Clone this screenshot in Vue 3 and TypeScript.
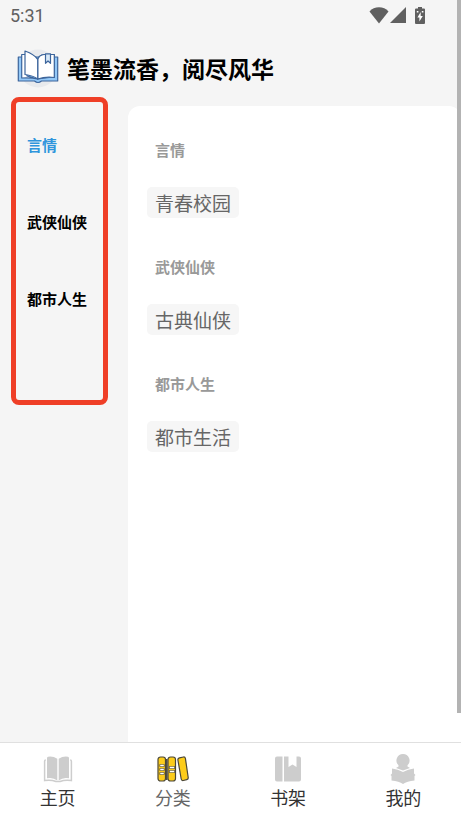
<script setup lang="ts">
import { ref } from 'vue'

interface Category {
  name: string
  tags: string[]
}

interface Tab {
  id: string
  label: string
}

const categories: Category[] = [
  { name: '言情', tags: ['青春校园'] },
  { name: '武侠仙侠', tags: ['古典仙侠'] },
  { name: '都市人生', tags: ['都市生活'] },
]

const tabs: Tab[] = [
  { id: 'home', label: '主页' },
  { id: 'category', label: '分类' },
  { id: 'shelf', label: '书架' },
  { id: 'mine', label: '我的' },
]

const activeCategory = ref('言情')
const activeTab = ref('category')
</script>

<template>
  <div class="screen">
    <div class="status">
      <span class="clock">5:31</span>
      <div class="status-icons">
        <svg class="wifi" viewBox="0 0 20 17" aria-hidden="true">
          <path d="M10 16.500 0.500 4.500C3 1.600 6.200 .3 10 .3s7 1.300 9.500 4.200Z" />
        </svg>
        <svg class="signal" viewBox="0 0 16 16" aria-hidden="true">
          <path d="M16 0v16H0Z" />
        </svg>
        <svg class="battery" viewBox="0 0 10 17" aria-hidden="true">
          <path d="M3 0h4v1.500h2q1 0 1 1V16q0 1-1 1H1q-1 0-1-1V2.500q0-1 1-1h2Z" />
          <path class="bolt" d="M5.700 5 2.400 10.500h2V14.500L7.800 9H5.700ZM1.800 4h1.600v1.400H1.800ZM6.800 4h1.600v1.400H6.800Z" />
        </svg>
      </div>
    </div>

    <header class="header">
      <svg class="logo" viewBox="0 0 42 40" aria-hidden="true">
        <circle cx="21" cy="20.500" r="19" fill="#e8eaed" />
        <g stroke="#3c659c" stroke-width="1.200" stroke-linejoin="round">
          <path d="M1.300 9H40.700V33H24.500Q21 36 17.500 33H1.300Z" fill="#93c8f7" />
          <path d="M4.700 6.500H10V28L20.700 31 32 29.500H37.300V6.500H27Q22.500 7 20.700 11.300V31Q14 29.500 4.700 30Z" fill="#fff" />
          <path d="M20.700 31Q28 28.500 37.300 29.500V6.500H27Q22.500 7 20.700 11.300Z" fill="#fff" />
          <path d="M20.700 31V11.300Q17.500 6.500 8 3V26.500Q16 27.500 20.700 31Z" fill="#fff" />
          <path d="M28.500 5.800V15.300L31 13 33.500 15.300V5.800Z" fill="#d8e9f8" />
        </g>
      </svg>
      <h1 class="title">笔墨流香，阅尽风华</h1>
    </header>

    <div class="content">
      <nav class="sidebar" aria-label="分类">
        <button
          v-for="category in categories"
          :key="category.name"
          type="button"
          class="side-item"
          :class="{ active: category.name === activeCategory }"
          @click="activeCategory = category.name"
        >
          {{ category.name }}
        </button>
      </nav>

      <main class="panel">
        <section v-for="category in categories" :key="category.name" class="group">
          <h2 class="group-title">{{ category.name }}</h2>
          <div class="tags">
            <button v-for="tag in category.tags" :key="tag" type="button" class="tag">{{ tag }}</button>
          </div>
        </section>
      </main>
    </div>

    <nav class="tabbar" aria-label="导航">
      <button
        v-for="tab in tabs"
        :key="tab.id"
        type="button"
        class="tab"
        :class="{ active: tab.id === activeTab }"
        @click="activeTab = tab.id"
      >
        <svg v-if="tab.id === 'home'" class="tab-icon" viewBox="0 0 32 28" aria-hidden="true">
          <path d="M6 1.800Q11 1 15.300 3.800V25.500Q11 22 5 23.300V3Q5 2 6 1.800ZM26 1.800Q21 1 16.700 3.800V25.500Q21 22 27 23.300V3Q27 2 26 1.800Z" />
          <path d="M3.800 5Q2.600 5 2.600 6.200V25.500Q9 24.500 14 26.500H18Q23 24.500 29.400 25.500V6.200Q29.400 5 28.200 5" class="outline" />
        </svg>
        <svg v-else-if="tab.id === 'category'" class="tab-icon" viewBox="0 0 32 28" aria-hidden="true">
          <g fill="#fccc1b" stroke="#4b4738" stroke-width="1.200">
            <rect x="1" y="2" width="7.500" height="24" rx="2.500" />
            <rect x="11" y="2" width="7.500" height="24" rx="2.500" />
            <path d="m22.500 2.800 4-.8q1.500-.2 1.900 1.300L31.200 22.500q.2 1.700-1.400 2.100l-3.500.9q-1.800.3-2.100-1.500L20.900 5q-.2-1.800 1.600-2.200Z" />
          </g>
          <path d="M9.800 4v21" stroke="#4b4738" stroke-width="1.500" />
          <path d="M2.500 10.500h5M2.500 14.500h5M2.500 18.500h5M12 12.500h6M12 16.500h6" stroke="#4b4738" stroke-width="2.600" />
          <path d="M3.200 10.500h3.600M3.200 14.500h3.600M3.200 18.500h3.600M12.700 12.500h4.600M12.700 16.500h4.600" stroke="#fff" stroke-width="1.400" />
        </svg>
        <svg v-else-if="tab.id === 'shelf'" class="tab-icon" viewBox="0 0 32 28" aria-hidden="true">
          <path d="M5 1.500h5.500v25H5q-2 0-2-2v-21q0-2 2-2ZM12 1.500h4.500V12l4-2.500 4 2.500V1.500H27q2 0 2 2v21q0 2-2 2H12Z" />
        </svg>
        <svg v-else class="tab-icon" viewBox="0 0 32 30" aria-hidden="true">
          <path d="M16 0a6.500 6.500 0 0 1 4.500 11.200V12.500L23 14 16 16.500 9 14l2.500-1.500V11.200A6.500 6.500 0 0 1 16 0Z" />
          <path d="M5 14.500Q11 15 16 18 21 15 27 14.500V19.500L28.500 21 27.500 22V26.500Q20 27 16 30 12 27 4.500 26.500V22L3.500 21 5 19.500Z" />
        </svg>
        <span class="tab-label">{{ tab.label }}</span>
      </button>
    </nav>

    <div class="scroll-thumb" aria-hidden="true"></div>
  </div>
</template>

<style>
body {
  margin: 0;
  background: #f5f5f5;
}
</style>

<style scoped>
.screen {
  position: relative;
  display: flex;
  flex-direction: column;
  min-height: 100vh;
  background: #f5f5f5;
  color: #000;
  font-family: "Noto Sans CJK SC", sans-serif;
}

button {
  margin: 0;
  border: 0;
  background: none;
  font: inherit;
  color: inherit;
  cursor: pointer;
}

.status {
  display: flex;
  align-items: center;
  justify-content: space-between;
  height: 32px;
  padding: 0 36px 0 10px;
  color: #606060;
}

.clock {
  font-family: Roboto, sans-serif;
  font-size: 18px;
  line-height: 32px;
}

.status-icons {
  display: flex;
  align-items: center;
  height: 30px;
  margin-bottom: 2px;
  fill: #606060;
}

.wifi {
  width: 20px;
  height: 17px;
}

.signal {
  width: 16px;
  height: 16px;
  margin-left: 1px;
}

.battery {
  width: 10px;
  height: 17px;
  margin-left: 9px;
}

.bolt {
  fill: #fff;
}

.header {
  display: flex;
  align-items: center;
  gap: 8px;
  box-sizing: border-box;
  height: 65px;
  padding: 6px 17px 0;
}

.logo {
  flex: none;
  width: 42px;
  height: 40px;
}

.title {
  margin: 0;
  font-size: 23px;
  line-height: 32px;
  font-weight: 700;
}

.content {
  display: flex;
  flex: 1;
  align-items: flex-start;
}

.sidebar {
  display: flex;
  flex: none;
  flex-direction: column;
  gap: 53px;
  box-sizing: border-box;
  width: 97px;
  min-height: 308px;
  margin: 0 20px 0 11px;
  padding: 31px 11px;
  border: 5px solid #ef3f27;
  border-radius: 8px;
}

.side-item {
  padding: 0;
  font-size: 15px;
  line-height: 24px;
  font-weight: 700;
  text-align: left;
  white-space: nowrap;
}

.side-item.active {
  color: #2f95dc;
}

.panel {
  flex: 1;
  align-self: stretch;
  margin-top: 9px;
  padding: 32px 19px;
  background: #fff;
  border-radius: 12px 12px 0 0;
}

.group {
  margin-bottom: 37px;
}

.group-title {
  margin: 0 0 26px;
  padding: 0 8px;
  font-size: 15px;
  line-height: 23px;
  font-weight: 700;
  color: #999;
}

.tags {
  display: flex;
  flex-wrap: wrap;
  gap: 8px;
}

.tag {
  padding: 0 8px;
  border-radius: 5px;
  background: #f6f6f6;
  color: #666;
  font-size: 19px;
  line-height: 31px;
}

.tabbar {
  display: flex;
  border-top: 1px solid #e0e0e0;
  background: #fff;
}

.tab {
  display: flex;
  flex: 1;
  flex-direction: column;
  align-items: center;
  height: 77px;
  padding: 11px 0 0;
  color: #333;
}

.tab.active {
  color: #666;
}

.tab-icon {
  width: 32px;
  height: 30px;
  fill: #cdcdcd;
}

.outline {
  fill: none;
  stroke: #cdcdcd;
  stroke-width: 1.5;
}

.tab-label {
  font-size: 18px;
  line-height: 26px;
}

.scroll-thumb {
  position: absolute;
  top: 0;
  right: 0;
  width: 4px;
  height: 87%;
  background: #b3b3b3;
}
</style>
